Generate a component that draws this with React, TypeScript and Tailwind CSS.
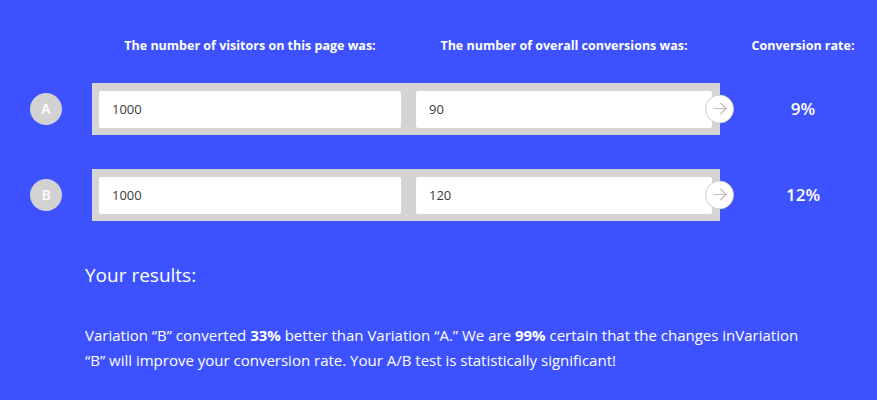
import React from "react";

const font = { fontFamily: "'Open Sans', Lato, sans-serif" };

function Arrow() {
  return (
    <div className="absolute right-[-14px] top-1/2 -translate-y-1/2 w-[29px] h-[29px] rounded-full bg-white border border-[#cfcfcf] flex items-center justify-center">
      <svg width="18" height="18" viewBox="0 0 24 24" fill="none" stroke="#bdbdbd" strokeWidth="1.6" strokeLinecap="round" strokeLinejoin="round">
        <path d="M4 12h16" />
        <path d="M13 5l7 7-7 7" />
      </svg>
    </div>
  );
}

function Row({ label, a, b, rate }: { label: string; a: string; b: string; rate: string }) {
  return (
    <div className="flex items-center">
      <div className="w-[92px] shrink-0 flex justify-center">
        <div className="w-[32px] h-[32px] rounded-full bg-[#d2d2d2] text-white flex items-center justify-center text-[14px] font-semibold">
          {label}
        </div>
      </div>
      <div className="relative shrink-0 w-[628px] h-[52px] bg-[#d4d4d4] pl-[7px] pr-[8px] pt-[8px] pb-[7px] flex gap-[15px]">
        <div className="w-[302px] h-[37px] bg-white rounded-[2px] flex items-center pl-[13px] text-[13px] text-[#3a3a3a]">{a}</div>
        <div className="w-[296px] h-[37px] bg-white rounded-[2px] flex items-center pl-[13px] text-[13px] text-[#3a3a3a]">{b}</div>
        <Arrow />
      </div>
      <div className="w-[166px] shrink-0 text-center text-white text-[17px] font-semibold">{rate}</div>
    </div>
  );
}

export default function App() {
  return (
    <div className="w-[877px] h-[400px] bg-[#3d52fe] overflow-hidden" style={font}>
      <div className="flex pt-[37px] text-white text-[12.5px] font-bold">
        <div className="w-[99px] shrink-0" />
        <div className="w-[302px] shrink-0 text-center">The number of visitors on this page was:</div>
        <div className="w-[15px] shrink-0" />
        <div className="w-[296px] shrink-0 text-center">The number of overall conversions was:</div>
        <div className="w-[8px] shrink-0" />
        <div className="w-[166px] shrink-0 text-center">Conversion rate:</div>
      </div>
      <div className="flex flex-col gap-[34px] mt-[27px]">
        <Row label="A" a="1000" b="90" rate="9%" />
        <Row label="B" a="1000" b="120" rate="12%" />
      </div>
      <div className="pl-[85px] text-white">
        <div className="mt-[42px] text-[19px] leading-[24px]">Your results:</div>
        <p className="mt-[36px] text-[15px] leading-[25px]">
          Variation “B” converted <b>33%</b> better than Variation “A.” We are <b>99%</b> certain that the changes inVariation
          <br />
          “B” will improve your conversion rate. Your A/B test is statistically significant!
        </p>
      </div>
    </div>
  );
}
